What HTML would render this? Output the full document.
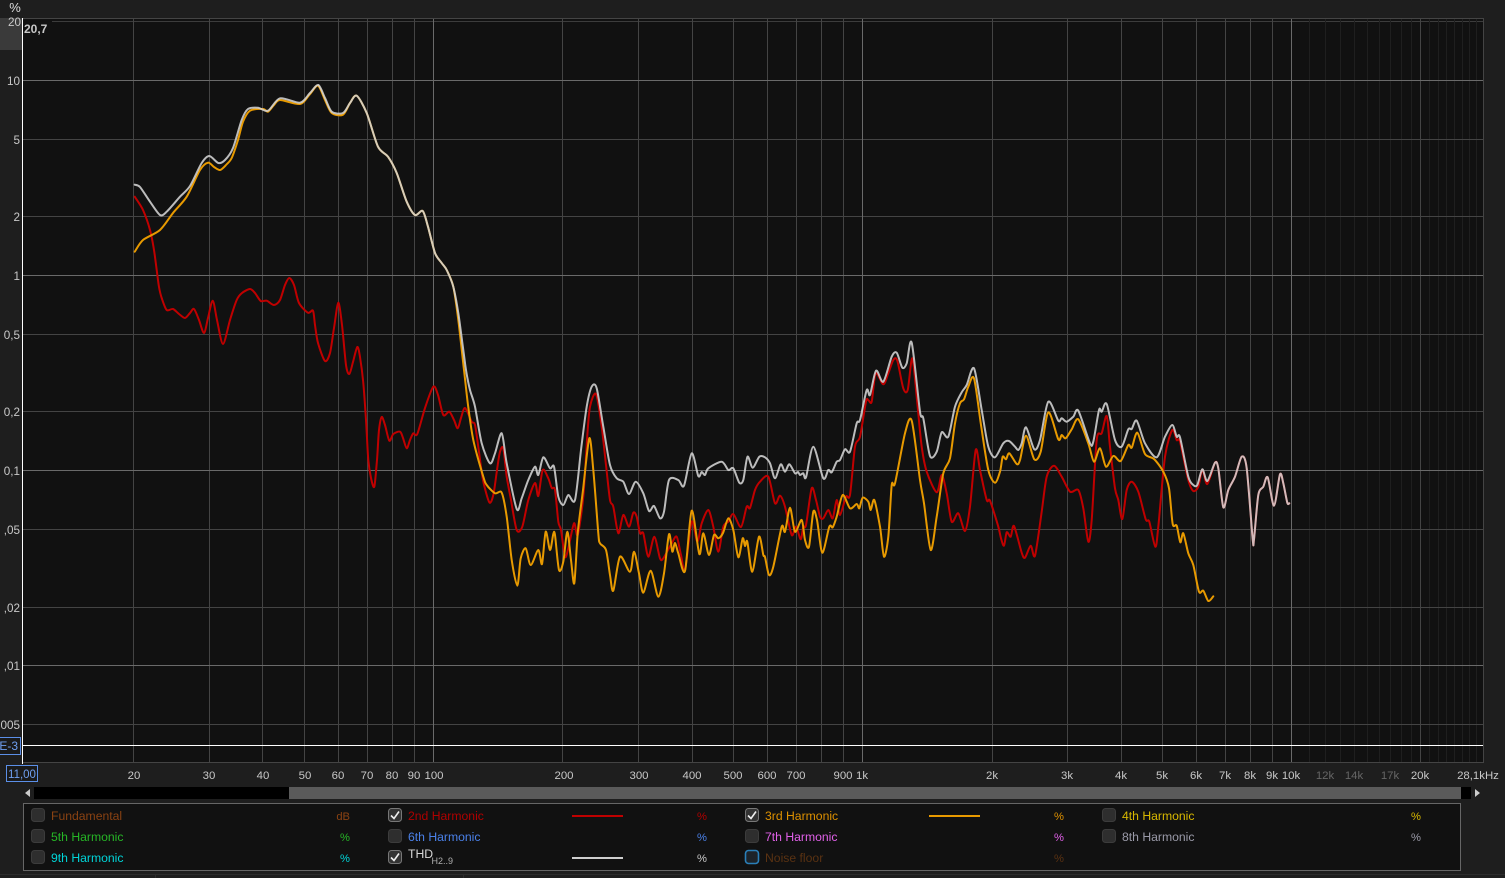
<!DOCTYPE html>
<html><head><meta charset="utf-8"><title>Distortion</title>
<style>
html,body{margin:0;padding:0;background:#1e1e1e}
body{width:1505px;height:878px;overflow:hidden;position:relative}
svg{position:absolute;left:0;top:0}
text{font-family:"Liberation Sans",sans-serif}
</style></head><body>
<svg width="1505" height="878" viewBox="0 0 1505 878" xmlns="http://www.w3.org/2000/svg">
<rect width="1505" height="878" fill="#1e1e1e"/>
<rect x="0" y="18" width="22" height="32" fill="#3a3a3a"/>
<rect x="22" y="18" width="1461" height="745" fill="#111"/>
<path d="M22 18.5H1483M1483.5 18V763M22 762.5H1484" stroke="#444" fill="none"/>
<path d="M52 21.5H1483" stroke="#3c3c3c"/>

<g stroke="#1f1f1f" stroke-width="1" fill="none">
<path d="M1309.5 19V762M1325.5 19V762M1340.5 19V762M1354.5 19V762M1367.5 19V762M1379.5 19V762M1390.5 19V762M1401.5 19V762M1411.5 19V762M1429.5 19V762M1438.5 19V762M1446.5 19V762M1454.5 19V762M1462.5 19V762M1469.5 19V762M1476.5 19V762"/>
</g>
<g stroke="#444" stroke-width="1" fill="none">
<path d="M133.5 19V762M209.5 19V762M262.5 19V762M304.5 19V762M338.5 19V762M367.5 19V762M392.5 19V762M414.5 19V762M562.5 19V762M638.5 19V762M692.5 19V762M733.5 19V762M767.5 19V762M796.5 19V762M821.5 19V762M843.5 19V762M992.5 19V762M1067.5 19V762M1121.5 19V762M1162.5 19V762M1196.5 19V762M1225.5 19V762M1250.5 19V762M1272.5 19V762M1420.5 19V762"/>
<path d="M22 139.5H1483M22 216.5H1483M22 334.5H1483M22 411.5H1483M22 529.5H1483M22 607.5H1483M22 724.5H1483"/>
</g>
<g stroke="#6a6a6a" stroke-width="1" fill="none">
<path d="M433.5 19V762M862.5 19V762M1291.5 19V762"/>
<path d="M22 80.5H1483M22 275.5H1483M22 470.5H1483M22 665.5H1483"/>
</g>
<path d="M22.5 18V764" stroke="#fff"/>
<path d="M22 745.5H1483" stroke="#fff"/>

<!-- 2nd harmonic -->
<polyline fill="none" stroke="#c00000" stroke-width="2" stroke-linejoin="round" stroke-linecap="round" points="134.7,196.7 143,210 150,230 154,250 156.7,270 159,287 161.7,298 166.7,310 173,309 179,314 185,318 190,313 194,309 199,320 204,333 208,318 212.7,300.7 217,320 223,344 230,320 236.7,300 242,293 250,289 255,293 260.7,301 266.7,300.7 274,305 280,300 285,285 289.3,278 294,285 299,303 308,312.7 313,310.7 315,325 318,343 325,361 330,353 334,328 338.3,302.7 342,325 346,365 349.3,374 353,362 357.3,347 360,357 363.3,383 366,420 368.3,460 371,478 374.3,486.7 377,460 379,430 381.7,417 385,425 389.3,440.7 393.3,434 400,431.7 403,438 406.7,448.3 410,440 413.3,433.3 417.3,434 425,408 433.3,386.7 438,395 443.3,415 449.3,411.7 454,420 457.7,428.3 461,418 465,408 471.7,421.7 475,425 479,452 483,480 489.3,502.3 493.3,495 497,470 500,451.7 503.3,448.3 506.7,476.7 511,500 516.7,530 522.3,526.7 528.3,500 535,483 538.3,496 542.7,470 548.3,478.3 551.7,488 555,490 558.3,521.7 561,530 565,556.7 568.3,548.3 574,523.3 577.7,535 583.3,496.7 587,440 590,406.7 596,394 601.7,426.7 606,465 610,500 613.3,506.7 618.3,533.3 623.3,515 629,526.7 633.3,512.7 636.7,516.7 640,533.3 643.3,533.3 648.3,556.7 654.3,536.7 660,558.3 663.3,558.3 671.7,543.3 676.7,536.7 681,555 685,570 691.7,521.7 697.3,541.7 701.7,523.3 708.3,510 713.3,526.7 718.3,551.7 723.3,526.7 728.3,521.7 733.3,514 741,527 746.7,506.7 750,508 755,490 760,481.7 768.3,476.7 775,503.3 780,495.7 785,506.7 791.7,535 796,526.7 800.7,539.3 803.3,526.7 806,525 811.7,488.3 816,500 820,516.7 823.3,518.3 828.3,510 832.7,518.3 836.7,500 840,515 846,496.7 850,495 855,446.7 860,436.7 866,401.7 868.3,400 871.7,401.7 875.7,373.3 883.3,384.3 888.3,373.3 893.3,360 897.3,360.7 903.3,388.3 907.7,390 912.3,358.3 917,400 921.7,446.7 926.7,471.7 936.7,492.3 941.7,475 946.7,493.3 951.7,521.7 958.3,513.3 965,531 970,506.7 975.7,450 980,470 986.7,500 990,500.7 998.3,526.7 1001,538.3 1004,545.7 1006.7,532.3 1010.7,536.7 1014,526 1021.7,552.7 1025,557.7 1030.7,545.7 1035,555.7 1041.7,511.7 1046.7,476.7 1054,465.7 1061.7,476.7 1070,491.7 1078.3,490 1083.3,508.3 1088.3,541.7 1091.7,520 1096.7,440 1101.7,433.3 1106.7,416 1110,446.7 1115,488.3 1118.3,500 1122.3,519 1126.7,490 1131.7,481.7 1138.3,491.7 1145.7,519.3 1149.3,521.7 1155.3,546.7 1158.3,526.7 1165,456.7 1172.3,430 1176.7,440 1180,441.7 1188.3,480 1193.3,491 1198.3,486.7 1202.3,470 1207.3,484 1215,462.7 1218.3,468.3 1223.3,507.3 1228.3,490 1235,476.7 1241.7,456.7 1246.7,468.3 1252.7,539.3 1254,539.3 1258.3,495 1263.3,486.7 1267.7,477.3 1274,505.7 1280,474.3 1283.3,483.3 1287.3,502.7 1289.3,503.3"/>

<!-- 3rd harmonic -->
<polyline fill="none" stroke="#e89a00" stroke-width="2" stroke-linejoin="round" stroke-linecap="round" points="134.7,251.7 143,240 160,230 173,213 186.7,196.7 200,170 208,162.7 214,167 220,170 226,165 231.7,158 238,140 243,121.7 250,110.7 263,109 268,111.7 274,105 280,100 300,104 310,94 318,85.7 325,100 331.7,113 343,114.7 350,103 356.7,95.7 366.7,113 378,146.7 388,156.7 396.7,173 406.7,201.7 415,215 422.7,211 428,226.7 435,253 441.7,263 446.7,270 453.3,286.7 458.3,320 464,370 468,405 473.3,440 483.3,476.7 486.7,485 495,493.3 501.7,492.7 506.7,516.7 511.7,560 517.3,585.7 520.7,558.3 525.7,548.3 530.7,565 538.3,550 542,564 545.7,531.7 550,550 553.3,534 555,535 559,570 563.3,561.7 567.3,531.7 571,560 574.3,583.3 577.7,533.3 583,490 589.3,438.3 593.3,470 598.3,533.3 600,543.3 606,550 610,575 613.3,590.7 620,556.7 630,571.7 634,551.7 639,573.3 643.3,592.7 650.7,570.7 658.3,596.7 664,573.3 669,534.3 672.3,551.7 675,543 678.3,553.3 685,571 691.7,510.7 699.3,554 703.3,533.3 709,555 714,535 718.3,538.3 723,533 728.3,518.3 733.3,530 738.3,557.3 742.7,538.3 745,546 747.3,541.7 752.3,571.7 759,536.7 763.3,555 765,557 769,575 773.3,566.7 781.7,526.7 785,531.7 790,507.7 795,531.7 801.7,520 805,540 809,546.7 813.3,511.7 817,520 822.3,552.7 829.3,526.7 832.7,527.3 836.7,516.7 842.7,495 850,508.3 856.7,504 859.3,508.3 862.7,497.7 868.3,501.7 870.7,510 874.3,500 880,526.7 884,556.7 888.3,536.7 891.7,485 895,483.3 905,433.3 911.7,420.7 920,480 924,503.3 930.7,550 936.7,516.7 943.3,473.3 950,458.3 955,423.3 960,403.3 964,399.3 968.3,386.7 974,378.3 981,425 988.3,470 995,482.7 1000,471.7 1002.7,456.7 1006,459.3 1009.3,453.3 1016.7,464 1020,460 1026,435.7 1034.3,459.3 1040.7,451.7 1048.3,412.3 1058.3,439.3 1061.7,435 1065.7,438.3 1071.7,429.3 1078.3,419.3 1088.3,443.3 1094,461.7 1100,448.3 1106,466.7 1113.3,456 1120.7,461 1128.3,445 1131.7,447.7 1137.3,432.7 1145,454 1154,459 1163.3,471.7 1169,488.3 1172.7,524 1176.7,525.7 1180.3,542.3 1183.3,533.3 1188.3,553.3 1193.3,565 1199,591.7 1203.3,590.7 1208.3,601 1213.3,596.3"/>

<!-- THD -->
<polyline fill="none" stroke="#d4d4d4" stroke-opacity=".88" stroke-width="2" stroke-linejoin="round" stroke-linecap="round" points="134.7,184.7 140,187 150,201.7 160,215 166.7,211.7 180,196.7 190,186 201.7,163 209.3,156 218.3,163 225,160 233,148 241.7,120 248,109 258,107.7 268,110.7 280,98.3 300,102.7 310,93 318.3,85 325,98 331.7,111.7 343,113 350,103 356.7,95.7 366.7,113 378,146.7 388,156.7 396.7,173 406.7,201.7 415,215 422.7,211 428,226.7 435,253 441.7,263 446.7,270 453.3,286.7 458.3,313 463.3,350 466,370 470,390 475,406.7 481.7,443.3 490,463.3 495,453.3 501.7,433.3 506.7,463.3 516.7,509 521.7,498.3 528.3,480 535,466.7 538.3,475 543.3,457.3 550,468.3 554,466.7 558.3,496.7 563.3,505 568.3,495 575,500 581,450 586.7,406.7 591.7,386.7 596.7,388.3 603.3,426.7 610,465 616.7,478.3 623.3,481.7 629,494 635.7,481.7 643.3,493.3 649,511 654,506 660,518.3 664,511.7 669,480 678.3,480 684,485.7 691.7,453.3 698.3,476 701.7,472 705,475 708.3,468.3 721.7,461.7 728.3,470 733.3,468.3 739.3,482.7 743.3,480 747.5,456.7 752.7,467.7 759.3,456.7 765,457.3 770,463.3 775,478.3 780.7,464.3 785,471.7 789.3,464.3 795,473.3 798,472 800,475 803.3,473.3 806,477.3 813.3,446.7 823.3,478.3 828.3,470 831.7,472.3 836.7,461.7 840,460 845,449.3 850,451.7 856.7,423.3 860,420 866.7,390 870,395 876,370.7 883.3,381.7 891.7,356.7 896.7,352.7 902.3,367.7 906.7,363.3 911.7,342.7 920,411.7 923.3,418.3 930,456 936.7,451.7 941.7,432.3 948.3,436.7 955,406.7 961.7,392.3 966.7,385 974,368.3 981.7,410 988.3,446.7 995,457.3 1003.3,443.3 1009,441 1015,446.7 1018.3,450 1021.7,443.3 1026,427.3 1034.3,449.3 1040,440 1048.3,401.7 1058.3,420.7 1061.7,418.3 1066.7,421.7 1073.3,416.7 1078.3,410.7 1090,443.3 1093.3,441.7 1099,410 1101.7,411.7 1106.7,404 1115,440 1121.7,446.7 1128.3,429.3 1131.7,429 1136.7,420.7 1145,443.3 1156.7,457.3 1165,436.7 1172.3,425 1176.7,436.7 1180,437.3 1188.3,476.7 1193.3,485 1197.3,485 1202.3,469.3 1207.3,481 1215,462.7 1218.3,468.3 1223.3,507.3 1228.3,490 1235,476.7 1241.7,456.7 1246.7,468.3 1252.7,539.3 1254,539.3 1258.3,495 1263.3,486.7 1267.7,477.3 1274,505.7 1280,474.3 1283.3,483.3 1287.3,502.7 1289.3,503.3"/>

<!-- axis left -->
<text x="15" y="12" font-size="13" fill="#ddd" text-anchor="middle">%</text>
<g font-size="11.7" fill="#c8c8c8" text-anchor="end">
<text x="21" y="26">20</text>
<text x="20" y="85">10</text>
<text x="20" y="144">5</text>
<text x="20" y="221">2</text>
<text x="20" y="280">1</text>
<text x="20" y="339">0,5</text>
<text x="20" y="416">0,2</text>
<text x="20" y="475">0,1</text>
<text x="20" y="534">,05</text>
<text x="20" y="612">,02</text>
<text x="20" y="670">,01</text>
<text x="20" y="729">,005</text>
</g>
<text x="24" y="33" font-size="12" font-weight="bold" fill="#c8c8c8">20,7</text>
<rect x="-2" y="737.5" width="22.5" height="17" fill="#1a1a1a" stroke="#5b8fe8"/>
<text x="18" y="750" font-size="12" fill="#6f9ff0" text-anchor="end">E-3</text>

<!-- axis bottom -->
<rect x="6.5" y="765.5" width="31" height="16" fill="#1a1a1a" stroke="#5b8fe8"/>
<text x="22" y="778" font-size="11.5" fill="#6f9ff0" text-anchor="middle">11,00</text>
<g font-size="11.4" fill="#c8c8c8" text-anchor="middle">
<text x="134" y="779">20</text><text x="209" y="779">30</text><text x="263" y="779">40</text><text x="305" y="779">50</text><text x="338" y="779">60</text><text x="367" y="779">70</text><text x="392" y="779">80</text><text x="414" y="779">90</text><text x="434" y="779">100</text>
<text x="564" y="779">200</text><text x="639" y="779">300</text><text x="692" y="779">400</text><text x="733" y="779">500</text><text x="767" y="779">600</text><text x="796" y="779">700</text><text x="843" y="779">900</text><text x="862" y="779">1k</text>
<text x="992" y="779">2k</text><text x="1067" y="779">3k</text><text x="1121" y="779">4k</text><text x="1162" y="779">5k</text><text x="1196" y="779">6k</text><text x="1225" y="779">7k</text><text x="1250" y="779">8k</text><text x="1272" y="779">9k</text><text x="1291" y="779">10k</text>
<g fill="#666"><text x="1325" y="779">12k</text><text x="1354" y="779">14k</text><text x="1390" y="779">17k</text></g>
<text x="1420" y="779">20k</text>
<text x="1478" y="779">28,1kHz</text>
</g>

<!-- scrollbar -->
<rect x="34" y="787" width="255" height="12" fill="#000"/>
<rect x="289" y="787" width="1172" height="12" fill="#5a5a5a"/>
<rect x="1461" y="787" width="10" height="12" fill="#000"/>
<path d="M30 789V797L25 793Z" fill="#ccc"/>
<path d="M1475 789V797L1480 793Z" fill="#ccc"/>

<!-- legend -->
<rect x="23.5" y="803.5" width="1437" height="67" fill="#111" stroke="#666"/>
<path d="M0 874.5H1505M155.5 875V878M463.5 875V878" stroke="#2c2c2c"/>
<g fill="#2e2e2e" stroke="#3c3c3c">
<rect x="31.5" y="808.5" width="13" height="13" rx="3"/>
<rect x="31.5" y="829.5" width="13" height="13" rx="3"/>
<rect x="31.5" y="850.5" width="13" height="13" rx="3"/>
<rect x="388.5" y="829.5" width="13" height="13" rx="3"/>
<rect x="745.5" y="829.5" width="13" height="13" rx="3"/>
<rect x="1102.5" y="808.5" width="13" height="13" rx="3"/>
<rect x="1102.5" y="829.5" width="13" height="13" rx="3"/>
</g>
<g fill="#333" stroke="#777">
<rect x="388.5" y="808.5" width="13" height="13" rx="3"/>
<rect x="388.5" y="850.5" width="13" height="13" rx="3"/>
<rect x="745.5" y="808.5" width="13" height="13" rx="3"/>
</g>
<g fill="none" stroke="#eee" stroke-width="1.6">
<path d="M391 815.5L394 818.5L399 811.5"/>
<path d="M391 857.5L394 860.5L399 853.5"/>
<path d="M748 815.5L751 818.5L756 811.5"/>
</g>
<rect x="745.5" y="850.5" width="13" height="13" rx="3" fill="#1d2329" stroke="#2a7fb8" stroke-width="1.6"/>
<path d="M572 816H623" stroke="#c00000" stroke-width="2"/>
<path d="M929 816H980" stroke="#e89a00" stroke-width="2"/>
<path d="M572 858H623" stroke="#cfcfcf" stroke-width="2"/>
<g font-size="12.2">
<text x="51" y="820" fill="#8a4212">Fundamental</text>
<text x="51" y="841" fill="#26b526">5th Harmonic</text>
<text x="51" y="862" fill="#00d4d8">9th Harmonic</text>
<text x="408" y="820" fill="#b00000">2nd Harmonic</text>
<text x="408" y="841" fill="#4a80e8">6th Harmonic</text>
<text x="408" y="858" fill="#d8d8d8">THD</text>
<text x="431.500" y="864" font-size="9" fill="#b0b0b0">H2..9</text>
<text x="765" y="820" fill="#dd9000">3rd Harmonic</text>
<text x="765" y="841" fill="#e060e8">7th Harmonic</text>
<text x="765" y="862" fill="#5a3212">Noise floor</text>
<text x="1122" y="820" fill="#d8b800">4th Harmonic</text>
<text x="1122" y="841" fill="#9a9aa8">8th Harmonic</text>
<g text-anchor="end" font-size="11.2">
<text x="350" y="820" fill="#8a4212">dB</text>
<text x="350" y="841" fill="#26b526">%</text>
<text x="350" y="862" fill="#00d4d8">%</text>
<text x="707" y="820" fill="#b00000">%</text>
<text x="707" y="841" fill="#4a80e8">%</text>
<text x="707" y="862" fill="#c8c8c8">%</text>
<text x="1064" y="820" fill="#dd9000">%</text>
<text x="1064" y="841" fill="#e060e8">%</text>
<text x="1064" y="862" fill="#5a3212">%</text>
<text x="1421" y="820" fill="#d8b800">%</text>
<text x="1421" y="841" fill="#9a9aa8">%</text>
</g>
</g>
</svg>
<script>
document.querySelectorAll('polyline').forEach(function(pl){
  var p=pl.getAttribute('points').trim().split(/\s+/).map(function(s){return s.split(',').map(Number)});
  var d='M'+p[0][0]+' '+p[0][1],k=0.14;
  for(var i=0;i<p.length-1;i++){
    var a=p[Math.max(i-1,0)],b=p[i],c=p[i+1],e=p[Math.min(i+2,p.length-1)];
    var c1x=b[0]+(c[0]-a[0])*k,c1y=b[1]+(c[1]-a[1])*k,c2x=c[0]-(e[0]-b[0])*k,c2y=c[1]-(e[1]-b[1])*k;
    d+='C'+c1x.toFixed(1)+' '+c1y.toFixed(1)+' '+c2x.toFixed(1)+' '+c2y.toFixed(1)+' '+c[0]+' '+c[1];
  }
  var path=document.createElementNS('http://www.w3.org/2000/svg','path');
  path.setAttribute('d',d);
  ['fill','stroke','stroke-width','stroke-opacity','stroke-linejoin','stroke-linecap'].forEach(function(n){
    if(pl.hasAttribute(n))path.setAttribute(n,pl.getAttribute(n));
  });
  pl.parentNode.replaceChild(path,pl);
});
</script>
</body></html>
